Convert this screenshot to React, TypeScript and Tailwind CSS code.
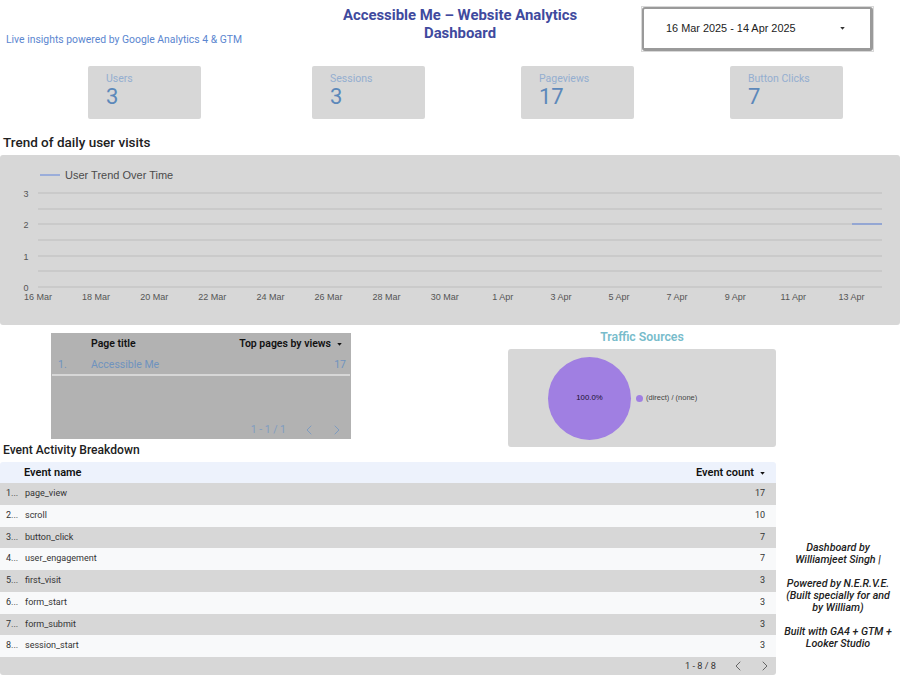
import { ChevronLeft, ChevronRight } from 'lucide-react';

const kpis = [
  { label: 'Users', value: '3', margin: 'ml-[88px]' },
  { label: 'Sessions', value: '3', margin: 'ml-[111px]' },
  { label: 'Pageviews', value: '17', margin: 'ml-[96px]' },
  { label: 'Button Clicks', value: '7', margin: 'ml-[96px]' },
];

const events = [
  ['page_view', '17'],
  ['scroll', '10'],
  ['button_click', '7'],
  ['user_engagement', '7'],
  ['first_visit', '3'],
  ['form_start', '3'],
  ['form_submit', '3'],
  ['session_start', '3'],
];

const xLabels = [
  '16 Mar', '18 Mar', '20 Mar', '22 Mar', '24 Mar', '26 Mar', '28 Mar', '30 Mar',
  '1 Apr', '3 Apr', '5 Apr', '7 Apr', '9 Apr', '11 Apr', '13 Apr',
];

const gridLines = [38, 54, 69, 85, 101, 116, 132];

function SortCaret() {
  return (
    <svg width="5" height="3" viewBox="0 0 6 4" className="ml-[6px] inline-block">
      <path d="M0 0h6L3 3.5z" fill="currentColor" />
    </svg>
  );
}

function TrendChart() {
  return (
    <svg width="900" height="170" viewBox="0 0 900 170" className="block">
      <line x1="40" x2="60" y1="20" y2="20" stroke="#5f83dc" strokeWidth="1" />
      <text x="65" y="24" fontSize="11" fill="#4b4b4b">User Trend Over Time</text>
      {gridLines.map((y) => (
        <line key={y} x1="38" x2="882" y1={y} y2={y} stroke="#bdbdbd" strokeWidth="1" />
      ))}
      {['3', '2', '1'].map((t, i) => (
        <text key={t} x="26" y={[42, 73, 105][i]} fontSize="9" fill="#555" textAnchor="middle">{t}</text>
      ))}
      <text x="26" y="136" fontSize="9" fill="#555" textAnchor="middle">0</text>
      {xLabels.map((label, i) => (
        <text key={label} x={38 + i * 58.1} y="145" fontSize="9" fill="#555" textAnchor="middle">{label}</text>
      ))}
      <line x1="852" x2="882" y1="69" y2="69" stroke="#5f83dc" strokeWidth="1" />
    </svg>
  );
}

export default function App() {
  return (
    <div className="w-[900px] h-[675px] overflow-hidden bg-white font-['Roboto',sans-serif]">
      <header className="flex h-[66px]">
        <p className="w-[340px] pl-[6px] pt-[33px] text-[10.4px] leading-[14px] text-[#5b86d0]">
          Live insights powered by Google Analytics 4 &amp; GTM
        </p>
        <h1 className="w-[240px] pt-[6px] text-center text-[14.9px] leading-[18px] font-bold text-[#3f4a9e]">
          Accessible Me – Website Analytics Dashboard
        </h1>
        <div className="ml-[61px] mt-[6px] h-[46px] w-[233px] border border-[#d8d8d8]">
          <div className="flex h-full items-center justify-between rounded-[3px] border-t-2 border-l-2 border-r-[3px] border-b-[3px] border-[#9a9a9a] bg-white pl-[22px] pr-[25px]">
            <span className="font-['Liberation_Sans',sans-serif] text-[10.9px] text-[#222]">16 Mar 2025 - 14 Apr 2025</span>
            <svg width="5" height="3" viewBox="0 0 6 4"><path d="M0 0h6L3 3.5z" fill="#333" /></svg>
          </div>
        </div>
      </header>

      <section className="flex h-[53px]">
        {kpis.map((k) => (
          <div key={k.label} className={`${k.margin} h-[53px] w-[113px] rounded-[2px] bg-[#d7d7d7] pl-[18px] pt-[6px]`}>
            <div className="text-[10.5px] leading-[14px] text-[#94aed0]">{k.label}</div>
            <div className="text-[22px] leading-[22px] text-[#5c88ba]">{k.value}</div>
          </div>
        ))}
      </section>

      <h2 className="h-[36px] pl-[3px] pt-[14px] text-[13.5px] leading-[18px] font-medium text-[#212121]">
        Trend of daily user visits
      </h2>
      <section className="h-[170px] rounded-[3px] bg-[#d7d7d7] font-['Liberation_Sans',sans-serif]">
        <TrendChart />
      </section>

      <section className="flex h-[137px] w-[776px]">
        <div className="w-[508px]">
          <div className="ml-[51px] mt-[8px] h-[106px] w-[300px] bg-[#b2b2b2]">
            <div className="flex h-[21px] items-center pr-[9px] pt-px text-[10.5px] font-semibold text-[#111]">
              <span className="ml-[40px]">Page title</span>
              <span className="ml-auto">Top pages by views</span>
              <SortCaret />
            </div>
            <div className="mx-px flex h-[22px] items-center border-b-2 border-[#d7d7d7] pr-[4px] pt-px text-[10.5px] text-[#6f93bf]">
              <span className="w-[39px] pl-[6px]">1.</span>
              <span>Accessible Me</span>
              <span className="ml-auto">17</span>
            </div>
            <div className="flex h-[63px] items-end justify-end pb-[1px] pr-[6px] text-[#7f9cc0]">
              <span className="mr-[15px] text-[10.5px] leading-[16px]">1 - 1 / 1</span>
              <ChevronLeft size={16} strokeWidth={1.5} className="mr-[12px]" />
              <ChevronRight size={16} strokeWidth={1.5} />
            </div>
          </div>
          <h3 className="pl-[3px] pt-[3px] text-[12.1px] leading-[16px] font-medium text-[#212121]">
            Event Activity Breakdown
          </h3>
        </div>
        <div className="w-[268px]">
          <h3 className="h-[24px] pt-[4px] text-center text-[12.3px] leading-[16px] font-semibold text-[#78bccb]">
            Traffic Sources
          </h3>
          <div className="flex h-[98px] items-center rounded-[3px] bg-[#d7d7d7] pl-[40px] font-['Liberation_Sans',sans-serif]">
            <div className="flex h-[83px] w-[83px] items-center justify-center rounded-full bg-[#a07fe2] text-[7.8px] text-[#1a1030]">
              100.0%
            </div>
            <span className="ml-[5px] h-[7px] w-[7px] rounded-full bg-[#a07fe2]" />
            <span className="ml-[3px] text-[7.5px] text-[#444]">(direct) / (none)</span>
          </div>
        </div>
      </section>

      <section className="flex">
        <div className="w-[776px] overflow-hidden rounded-[3px]">
          <div className="flex h-[21px] items-center bg-[#edf2fc] pr-[11px] pt-[2px] text-[11px] font-semibold text-[#111]">
            <span className="ml-[24px]">Event name</span>
            <span className="ml-auto">Event count</span>
            <SortCaret />
          </div>
          {events.map(([name, count], i) => (
            <div
              key={name}
              className={`flex h-[21.75px] items-center pr-[11px] text-[9px] text-[#333] ${i % 2 === 0 ? 'bg-[#d7d7d7]' : 'bg-[#f8f9fa]'}`}
            >
              <span className="w-[25px] pl-[6px]">{i + 1}...</span>
              <span>{name}</span>
              <span className="ml-auto">{count}</span>
            </div>
          ))}
          <div className="flex h-[18px] items-center justify-end bg-[#d7d7d7] pr-[3px] text-[9.2px] text-[#333]">
            <span className="mr-[14px]">1 - 8 / 8</span>
            <ChevronLeft size={16} strokeWidth={1.5} className="mr-[11px] text-[#666]" />
            <ChevronRight size={16} strokeWidth={1.5} className="text-[#666]" />
          </div>
        </div>
        <aside className="w-[124px] px-[11px] pt-[80px] text-center text-[10.7px] leading-[12px] font-medium italic text-[#222]">
          <p>Dashboard by Williamjeet Singh |</p>
          <p className="mt-[12px] -mx-[2px]">Powered by N.E.R.V.E. (Built specially for and by William)</p>
          <p className="mt-[12px] -mx-[6px]">Built with GA4 + GTM + Looker Studio</p>
        </aside>
      </section>
    </div>
  );
}
